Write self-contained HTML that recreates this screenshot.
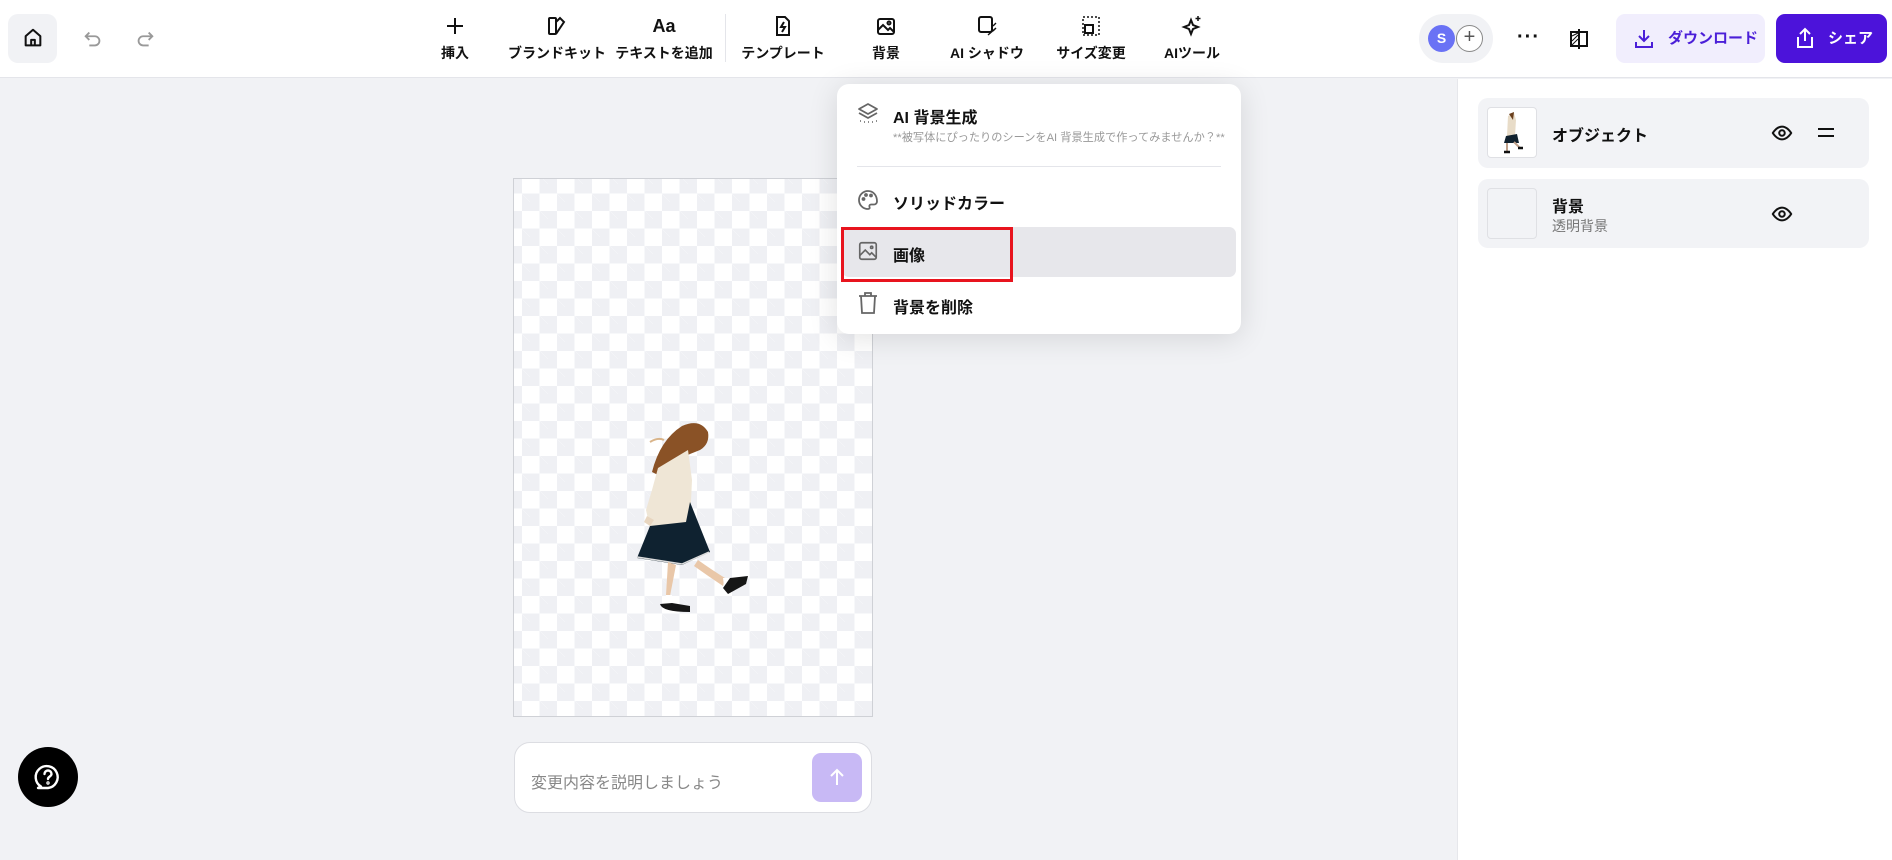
<!DOCTYPE html>
<html><head><meta charset="utf-8">
<style>
*{box-sizing:border-box;margin:0;padding:0}
body{width:1892px;height:860px;overflow:hidden;background:#f1f2f5;font-family:"Liberation Sans","Noto Sans CJK JP",sans-serif;color:#111;position:relative}
.top{position:absolute;left:0;top:0;width:1892px;height:78px;background:#fff;border-bottom:1px solid #e4e5ea}
.abs{position:absolute}
.tool{position:absolute;top:14px;width:100px;margin-left:-50px;text-align:center;font-size:14px;font-weight:bold;color:#111}
.tool svg{display:block;margin:0 auto 5px;width:24px;height:24px}
.right{position:absolute;left:1457px;top:79px;width:435px;height:781px;background:#fff;border-left:1px solid #e6e7eb}
.card{position:absolute;left:20px;width:391px;background:#f2f3f6;border-radius:10px}
.menu{position:absolute;left:837px;top:84px;width:404px;height:250px;background:#fff;border-radius:12px;box-shadow:0 4px 30px rgba(0,0,0,.12)}
.mi{position:absolute;left:56px;font-size:16px;font-weight:bold}
</style></head><body>
<div class="top">
  <div class="abs" style="left:8px;top:14px;width:49px;height:49px;background:#f1f2f5;border-radius:10px"></div>
  <svg class="abs" style="left:22px;top:27px" width="22" height="22" viewBox="0 0 24 24" fill="none" stroke="#111" stroke-width="2.2" stroke-linejoin="round"><path d="M4 10L12 3l8 7v10H4z"/><path d="M10 20v-6h4v6"/></svg>
  <svg class="abs" style="left:82px;top:28px" width="22" height="22" viewBox="0 0 24 24" fill="none" stroke="#999" stroke-width="2"><path d="M8 5L4 9l4 4"/><path d="M4 9h10a5 5 0 010 10H8"/></svg>
  <svg class="abs" style="left:134px;top:28px" width="22" height="22" viewBox="0 0 24 24" fill="none" stroke="#999" stroke-width="2"><path d="M16 5l4 4-4 4"/><path d="M20 9H10a5 5 0 000 10h6"/></svg>

  <div class="tool" style="left:455px"><svg viewBox="0 0 24 24" fill="none" stroke="#111" stroke-width="2"><path d="M12 4v16M4 12h16"/></svg>挿入</div>
  <div class="tool" style="left:557px"><svg viewBox="0 0 24 24" fill="none" stroke="#111" stroke-width="2"><rect x="4" y="4" width="7" height="16" rx="1"/><path d="M11 8l4-4 4 4-8 12"/></svg>ブランドキット</div>
  <div class="tool" style="left:664px"><div style="height:29px;font-size:18px;line-height:24px">Aa</div>テキストを追加</div>
  <div class="abs" style="left:725px;top:14px;width:1px;height:48px;background:#e4e5ea"></div>
  <div class="tool" style="left:783px"><svg viewBox="0 0 24 24" fill="none" stroke="#111" stroke-width="2"><path d="M6 3h8l4 4v14H6z"/><path d="M13 8l-3 5h4l-3 5"/></svg>テンプレート</div>
  <div class="tool" style="left:886px"><svg viewBox="0 0 24 24" fill="none" stroke="#111" stroke-width="2"><rect x="4" y="5" width="16" height="15" rx="2"/><path d="M4 16l5-5 5 5 2-2 4 4"/><circle cx="15" cy="9" r="1.5"/></svg>背景</div>
  <div class="tool" style="left:987px"><svg viewBox="0 0 24 24" fill="none" stroke="#111" stroke-width="2"><rect x="4" y="3" width="13" height="15" rx="2"/><path d="M18 12l3-3M18 17l3-3M13 21l8-7" stroke-width="1.4"/></svg>AI シャドウ</div>
  <div class="tool" style="left:1091px"><svg viewBox="0 0 24 24" fill="none" stroke="#111" stroke-width="2"><rect x="4" y="3" width="16" height="18" stroke-dasharray="2 2" stroke-width="1.5"/><rect x="6" y="11" width="8" height="8"/></svg>サイズ変更</div>
  <div class="tool" style="left:1192px"><svg viewBox="0 0 24 24" fill="none" stroke="#111" stroke-width="2"><path d="M11 6l2 5 5 2-5 2-2 5-2-5-5-2 5-2z"/><path d="M18 2v5M15.5 4.5h5" stroke-width="1.5"/></svg>AIツール</div>

  <div class="abs" style="left:1419px;top:14px;width:74px;height:49px;background:#f1f2f5;border-radius:25px"></div>
  <div class="abs" style="left:1456px;top:25px;width:27px;height:27px;border-radius:50%;border:1.5px solid #888;background:#fff;text-align:center;line-height:23px;font-size:20px;color:#555">+</div>
  <div class="abs" style="left:1428px;top:25px;width:27px;height:27px;border-radius:50%;background:#6a72f5;color:#fff;text-align:center;line-height:27px;font-size:14px;font-weight:bold">S</div>
  <div class="abs" style="left:1517px;top:26px;font-size:20px;font-weight:bold;letter-spacing:1px">···</div>
  <svg class="abs" style="left:1568px;top:28px" width="22" height="22" viewBox="0 0 22 22" fill="none" stroke="#111" stroke-width="2"><rect x="3" y="4" width="16" height="14"/><path d="M11 1v20"/><path d="M4 8l6-3M4 13l6-6M4 17l6-6" stroke-width="1"/></svg>
  <div class="abs" style="left:1616px;top:14px;width:149px;height:49px;background:#f1eefd;border-radius:9px;color:#4b1fd8;font-weight:bold;font-size:15px;line-height:49px;padding-left:52px">ダウンロード</div>
  <svg class="abs" style="left:1632px;top:27px" width="24" height="24" viewBox="0 0 24 24" fill="none" stroke="#4b1fd8" stroke-width="2"><path d="M12 3v11M7 9l5 5 5-5"/><path d="M4 15v5h16v-5"/></svg>
  <div class="abs" style="left:1776px;top:14px;width:111px;height:49px;background:#4c13da;border-radius:9px;color:#fff;font-weight:bold;font-size:15px;line-height:49px;padding-left:52px">シェア</div>
  <svg class="abs" style="left:1793px;top:26px" width="24" height="24" viewBox="0 0 24 24" fill="none" stroke="#fff" stroke-width="2"><path d="M12 15V3M7 8l5-5 5 5"/><path d="M5 11v10h14V11"/></svg>
</div>

<!-- canvas -->
<div class="abs" style="left:513px;top:178px;width:360px;height:539px;border:1px solid #cfd1d6;background-color:#fff;background-image:linear-gradient(45deg,#eff0f4 25%,transparent 25%,transparent 75%,#eff0f4 75%),linear-gradient(45deg,#eff0f4 25%,transparent 25%,transparent 75%,#eff0f4 75%);background-size:35px 35px;background-position:8px -3px,25.5px 14.5px"></div>
<svg class="abs" style="left:620px;top:410px" width="140" height="210" viewBox="0 0 140 210">
  <path d="M32 62 Q40 30 62 16 Q80 8 88 22 Q90 34 80 40 L70 44 Q52 52 40 66 Z" fill="#8a5226"/>
  <path d="M30 32 Q38 27 44 30" stroke="#d9b48a" stroke-width="2" fill="none"/>
  <path d="M38 58 L68 40 L72 70 L70 112 L64 120 L30 118 L26 100 L32 80 Z" fill="#efe6d6"/>
  <path d="M27 106 L24 112 L30 116 L34 110Z" fill="#e8d6c0"/>
  <path d="M30 116 L66 112 L70 92 L90 142 L62 155 L17 148 Z" fill="#0f2230"/>
  <path d="M17 147 L62 154 L89 142" stroke="#ddd" stroke-width="1.5" fill="none"/>
  <path d="M48 152 L46 185 L50 186 L56 155Z" fill="#e9c7a8"/>
  <path d="M46 185 L44 194 L52 194 L52 185Z" fill="#fff"/>
  <path d="M78 150 Q92 160 105 168 L103 176 Q88 166 74 156Z" fill="#e9c7a8"/>
  <path d="M103 168 L112 168 L112 176 L104 176Z" fill="#fff"/>
  <path d="M40 194 Q42 202 70 202 L70 196 L52 193Z" fill="#161616"/>
  <path d="M110 168 L128 166 L126 174 L108 184 L103 178Z" fill="#161616"/>
</svg>

<!-- prompt -->
<div class="abs" style="left:514px;top:742px;width:358px;height:71px;background:#fff;border:1px solid #dcdde2;border-radius:16px;font-size:16px;color:#888;padding:26px 0 0 16px">変更内容を説明しましょう</div>
<div class="abs" style="left:812px;top:753px;width:50px;height:49px;background:#c8b9f5;border-radius:9px"></div>
<svg class="abs" style="left:825px;top:765px" width="24" height="24" viewBox="0 0 24 24" fill="none" stroke="#fff" stroke-width="2"><path d="M12 20V5M6 11l6-6 6 6"/></svg>

<!-- help -->
<div class="abs" style="left:18px;top:747px;width:60px;height:60px;border-radius:50%;background:#000"></div>
<svg class="abs" style="left:33px;top:762px" width="30" height="30" viewBox="0 0 30 30" fill="none" stroke="#fff" stroke-width="2.4" stroke-linecap="round"><path d="M8 24.5A11 11 0 1115 26H5z" stroke-linejoin="round"/><path d="M11.5 12a3.5 3.5 0 117 0c0 2.5-3.5 2.5-3.5 5"/><circle cx="15" cy="21" r=".5" fill="#fff"/></svg>

<!-- right panel -->
<div class="right">
  <div class="card" style="top:19px;height:70px">
    <div class="abs" style="left:9px;top:9px;width:50px;height:51px;background:#fff;border:1px solid #dfe0e4;border-radius:4px"></div>
    <svg class="abs" style="left:20px;top:12px" width="28" height="46" viewBox="0 0 28 46"><path d="M10 6 L16 3 L18 10 L17 26 L9 26 Z" fill="#e8dcc8"/><path d="M11 4 L16 2 L15 10Z" fill="#6a3f1e"/><path d="M8 26 L19 24 L21 33 L6 33Z" fill="#10212e"/><path d="M9 33 L9 42 M16 32 L22 38" stroke="#bfa08a" stroke-width="2"/><path d="M6 42 L12 42 M20 38 L25 38" stroke="#111" stroke-width="2.5"/></svg>
    <div class="abs" style="left:74px;top:24px;font-size:16px;font-weight:bold">オブジェクト</div>
    <svg class="abs" style="left:293px;top:24px" width="22" height="22" viewBox="0 0 24 24" fill="none" stroke="#111" stroke-width="2.2"><path d="M2 12s4-7 10-7 10 7 10 7-4 7-10 7S2 12 2 12z"/><circle cx="12" cy="12" r="3"/></svg>
    <div class="abs" style="left:340px;top:30px;width:16px;height:2px;background:#111"></div>
    <div class="abs" style="left:340px;top:37px;width:16px;height:2px;background:#111"></div>
  </div>
  <div class="card" style="top:100px;height:69px">
    <div class="abs" style="left:9px;top:9px;width:50px;height:51px;background:#f2f3f6;border:1px solid #dfe0e4;border-radius:4px"></div>
    <div class="abs" style="left:74px;top:14px;font-size:16px;font-weight:bold">背景</div>
    <div class="abs" style="left:74px;top:37px;font-size:14px;color:#777">透明背景</div>
    <svg class="abs" style="left:293px;top:24px" width="22" height="22" viewBox="0 0 24 24" fill="none" stroke="#111" stroke-width="2.2"><path d="M2 12s4-7 10-7 10 7 10 7-4 7-10 7S2 12 2 12z"/><circle cx="12" cy="12" r="3"/></svg>
  </div>
</div>

<!-- menu -->
<div class="menu">
  <svg class="abs" style="left:19px;top:17px" width="24" height="24" viewBox="0 0 24 24" fill="none" stroke="#666" stroke-width="1.8" stroke-linejoin="round"><path d="M12 3l9 5-9 5-9-5z"/><path d="M3 12l9 5 9-5"/><path d="M4 20h1M8 21h1M12 21h1M16 21h1M20 20h1" stroke-width="1.5"/></svg>
  <div class="mi" style="top:20px">AI 背景生成</div>
  <div class="abs" style="left:56px;top:45px;font-size:11.2px;color:#999;white-space:nowrap">**被写体にぴったりのシーンをAI 背景生成で作ってみませんか？**</div>
  <div class="abs" style="left:20px;top:82px;width:364px;height:1px;background:#e4e5ea"></div>
  <svg class="abs" style="left:19px;top:104px" width="24" height="24" viewBox="0 0 24 24" fill="none" stroke="#666" stroke-width="1.8"><path d="M12 3a9 9 0 100 18c1.5 0 2-1 1.5-2s0-2.5 1.5-2.5H18a3 3 0 003-3C21 7 17 3 12 3z"/><circle cx="7.5" cy="11" r="1"/><circle cx="10" cy="7" r="1"/><circle cx="15" cy="7.5" r="1"/></svg>
  <div class="mi" style="top:106px">ソリッドカラー</div>
  <div class="abs" style="left:5px;top:143px;width:394px;height:50px;background:#e7e7eb;border-radius:7px"></div>
  <div class="abs" style="left:4px;top:143px;width:172px;height:55px;border:3px solid #e8141e"></div>
  <svg class="abs" style="left:20px;top:156px" width="22" height="22" viewBox="0 0 24 24" fill="none" stroke="#666" stroke-width="1.8"><rect x="3" y="3" width="18" height="18" rx="2"/><path d="M3 17l6-6 5 5 2-2 5 5"/><circle cx="16" cy="8" r="1.2"/></svg>
  <div class="mi" style="top:158px">画像</div>
  <svg class="abs" style="left:20px;top:207px" width="22" height="24" viewBox="0 0 22 24" fill="none" stroke="#666" stroke-width="1.8"><path d="M2 5h18M8 5V2h6v3"/><path d="M4 5l1 17h12l1-17"/></svg>
  <div class="mi" style="top:210px">背景を削除</div>
</div>
</body></html>
